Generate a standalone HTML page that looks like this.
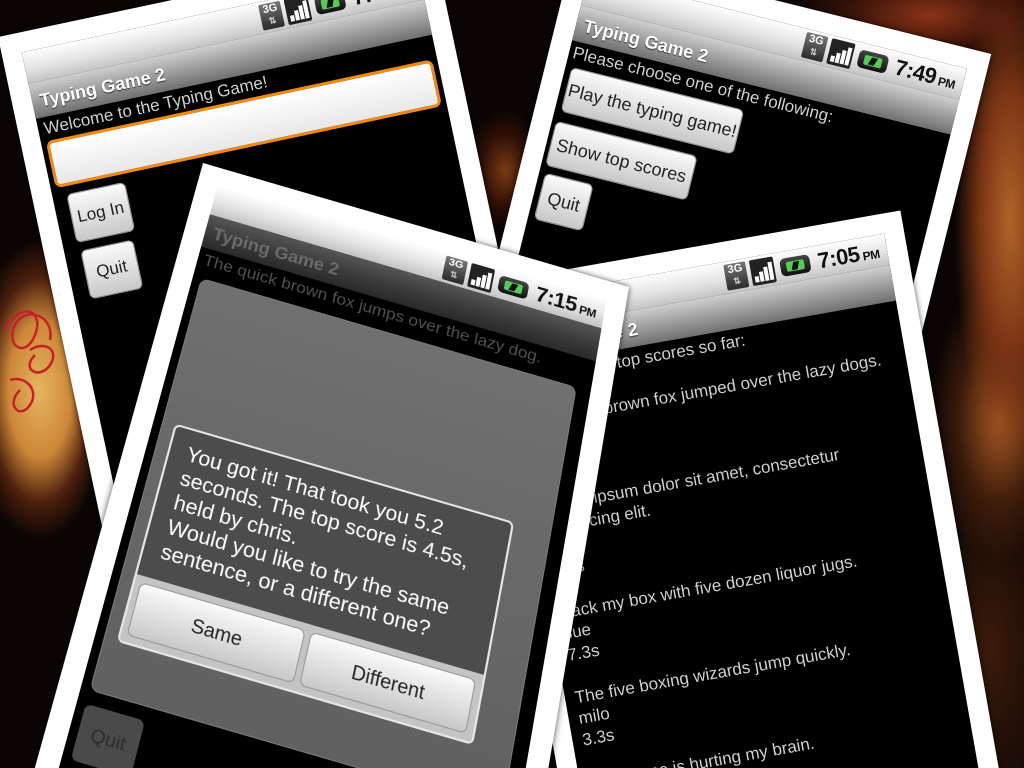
<!DOCTYPE html>
<html><head><meta charset="utf-8">
<style>
html,body{margin:0;padding:0;width:1024px;height:768px;overflow:hidden;background:#0a0504}
#w{position:relative;width:1024px;height:768px;overflow:hidden;font-family:"Liberation Sans","DejaVu Sans",sans-serif;
background:
radial-gradient(ellipse 70px 150px at 40px 390px,#e6b460 0%,#cc8838 45%,rgba(120,50,20,.6) 75%,rgba(0,0,0,0) 100%),
radial-gradient(ellipse 40px 60px at 505px 170px,#7a3a14 0%,rgba(70,20,8,.6) 60%,rgba(0,0,0,0) 100%),
radial-gradient(ellipse 55px 240px at 1010px 220px,#b06428 0%,#7a3414 55%,rgba(0,0,0,0) 100%),
radial-gradient(ellipse 70px 140px at 1000px 420px,#a85a22 0%,rgba(90,40,15,.6) 60%,rgba(0,0,0,0) 100%),
radial-gradient(ellipse 140px 60px at 930px 15px,#8a3416 0%,rgba(80,25,10,.6) 60%,rgba(0,0,0,0) 100%),
radial-gradient(ellipse 80px 200px at 990px 650px,#3a1a0a 0%,rgba(0,0,0,0) 100%),
#0a0504;background-repeat:no-repeat}
.card{position:absolute;left:0;top:0;background:#fff;transform-origin:0 0;box-shadow:0 0 6px rgba(0,0,0,.7)}
.scr{position:absolute;left:20px;top:20px;background:#000;overflow:hidden}
.sb{position:absolute;left:0;top:0;right:0;height:32px;background:linear-gradient(#fefefe,#e4e4e4 55%,#c4c4c4)}
.tb{position:absolute;left:0;top:32px;right:0;height:36px;background:linear-gradient(#cfcfcf,#9a9a9a 55%,#707070);color:#fff;font-weight:bold;font-size:18px;line-height:38px;padding-left:8px;text-shadow:0 1px 1px #333}
.ic{position:absolute;right:8px;top:3px;height:26px;display:flex;align-items:center;gap:4px}
.g3{width:22px;height:26px;background:linear-gradient(#777,#2a2a2a);border-radius:2px;color:#fff;font:bold 11px/12px "Liberation Sans",sans-serif;text-align:center}
.g3 span{display:block;font-size:9px;color:#ccc}
.sig{width:24px;height:26px;background:#222;border-radius:2px;position:relative}
.sig i{position:absolute;bottom:3px;width:4px;background:#fff}
.bat{width:30px;height:18px;background:linear-gradient(#444,#111);border-radius:5px;position:relative;margin-left:2px}
.bat i{position:absolute;left:6px;top:4px;width:18px;height:10px;background:#5c5;border-radius:2px}
.bat b{position:absolute;left:12px;top:5px;width:6px;height:8px;background:#111;transform:skewX(-20deg)}
.tm{font-weight:bold;font-size:22px;color:#111;margin-left:4px;letter-spacing:-.5px}
.tm small{font-size:12px;margin-left:3px}
.btn{position:absolute;background:linear-gradient(#fafafa,#e2e2e2 50%,#c8c8c8);border:1px solid #9a9a9a;border-radius:6px;color:#222;font-size:17px;text-align:center;box-sizing:border-box}
.txt{position:absolute;left:6px;color:#cfcfcf;font-size:17px;white-space:nowrap}
</style></head><body><div id="w">

<svg style="position:absolute;left:0;top:290px" width="110" height="150" viewBox="0 0 110 150">
<g fill="none" stroke="#c8202a" stroke-width="2.5">
<path d="M5 40 C20 10,45 20,35 45 C25 70,5 55,15 35 C25 15,55 25,50 50"/>
<path d="M30 60 C45 50,60 60,50 75 C40 90,20 80,35 65"/>
<path d="M10 90 C25 85,40 100,30 115 C20 130,5 115,20 100"/>
</g></svg>

<!-- Card A -->
<div class="card" style="width:445px;height:650px;transform:translate(-2px,37px) rotate(-12deg)">
 <div class="scr" style="width:405px;height:610px">
  <div class="sb"><div class="ic"><div class="g3">3G<span>⇅</span></div><div class="sig"><i style="left:3px;height:6px"></i><i style="left:8px;height:10px"></i><i style="left:13px;height:14px"></i><i style="left:18px;height:18px"></i></div><div class="bat"><i></i><b></b></div><div class="tm">7:48<small>PM</small></div></div></div>
  <div class="tb">Typing Game 2</div>
  <div class="txt" style="top:70px;color:#d0d0d0">Welcome to the Typing Game!</div>
  <div style="position:absolute;left:5px;top:92px;width:395px;height:48px;box-sizing:border-box;border:3px solid #f28a12;border-radius:7px;background:linear-gradient(#fff,#e8e8e8)"></div>
  <div class="btn" style="left:14px;top:148px;width:60px;height:50px;line-height:48px">Log In</div>
  <div class="btn" style="left:16px;top:206px;width:54px;height:50px;line-height:48px">Quit</div>
 </div>
</div>

<!-- Card B -->
<div class="card" style="width:430px;height:600px;transform:translate(574px,-50px) rotate(14deg)">
 <div class="scr" style="width:390px;height:560px">
  <div class="sb"><div class="ic"><div class="g3">3G<span>⇅</span></div><div class="sig"><i style="left:3px;height:6px"></i><i style="left:8px;height:10px"></i><i style="left:13px;height:14px"></i><i style="left:18px;height:18px"></i></div><div class="bat"><i></i><b></b></div><div class="tm">7:49<small>PM</small></div></div></div>
  <div class="tb">Typing Game 2</div>
  <div class="txt" style="top:70px;left:4px;color:#d0d0d0">Please choose one of the following:</div>
  <div class="btn" style="left:6px;top:94px;width:178px;height:46px;line-height:44px;font-size:18px">Play the typing game!</div>
  <div class="btn" style="left:4px;top:150px;width:146px;height:46px;line-height:44px;font-size:18px">Show top scores</div>
  <div class="btn" style="left:6px;top:203px;width:50px;height:48px;line-height:46px;font-size:18px">Quit</div>
 </div>
</div>

<!-- Card C -->
<div class="card" style="width:435px;height:620px;transform:translate(472px,286px) rotate(-10deg)">
 <div class="scr" style="width:395px;height:580px">
  <div class="sb"><div class="ic"><div class="g3">3G<span>⇅</span></div><div class="sig"><i style="left:3px;height:6px"></i><i style="left:8px;height:10px"></i><i style="left:13px;height:14px"></i><i style="left:18px;height:18px"></i></div><div class="bat"><i></i><b></b></div><div class="tm">7:05<small>PM</small></div></div></div>
  <div class="tb">Typing Game 2</div>
  <div style="position:absolute;left:10px;top:70px;color:#cfcfcf;font-size:17px;line-height:21.5px;white-space:pre">Here are the top scores so far:

The quick brown fox jumped over the lazy dogs.
chris
4.5s

Lorem ipsum dolor sit amet, consectetur
adipiscing elit.
dave
7.1s

Pack my box with five dozen liquor jugs.
sue
7.3s

The five boxing wizards jump quickly.
milo
3.3s

This game is hurting my brain.</div>
 </div>
</div>

<!-- Card D (front, perspective) -->
<div class="card" style="width:440px;height:660px;transform:matrix3d(0.968841,0.282114,0,0.00000104,-0.2846,0.832,0,-0.0002145,0,0,1,0,203,163,0,1)">
 <div class="scr" style="width:400px;height:640px">
  <div class="sb"><div class="ic"><div class="g3">3G<span>⇅</span></div><div class="sig"><i style="left:3px;height:6px"></i><i style="left:8px;height:10px"></i><i style="left:13px;height:14px"></i><i style="left:18px;height:18px"></i></div><div class="bat"><i></i><b></b></div><div class="tm">7:15<small>PM</small></div></div></div>
  <div class="tb" style="background:linear-gradient(#555,#3a3a3a 55%,#2a2a2a);color:#6a6a6a;text-shadow:none">Typing Game 2</div>
  <div class="txt" style="top:71px;color:#505050">The quick brown fox jumps over the lazy dog.</div>
  <div style="position:absolute;left:8px;top:100px;width:376px;height:408px;border-radius:8px;background:linear-gradient(#707070,#606060);border:1px solid #7a7a7a"></div>
  <div style="position:absolute;left:8px;top:522px;width:54px;height:50px;border-radius:6px;background:#4a4a4a;color:#2c2c2c;font-size:17px;line-height:50px;text-align:center">Quit</div>
  <div style="position:absolute;left:20px;top:250px;width:330px;height:212px;box-sizing:border-box;border:2px solid #e6e6e6;border-radius:6px;background:#4c4c4c;overflow:hidden">
   <div style="position:absolute;left:16px;top:12px;color:#fff;font-size:20px;line-height:24px;white-space:pre">You got it! That took you 5.2
seconds. The top score is 4.5s,
held by chris.
Would you like to try the same
sentence, or a different one?</div>
   <div style="position:absolute;left:0;right:0;top:146px;bottom:0;background:#c4c4c4">
    <div class="btn" style="left:5px;top:6px;width:155px;height:50px;line-height:48px;font-size:18px">Same</div>
    <div class="btn" style="left:165px;top:6px;width:155px;height:50px;line-height:48px;font-size:18px">Different</div>
   </div>
  </div>
 </div>
</div>

</div></body></html>
